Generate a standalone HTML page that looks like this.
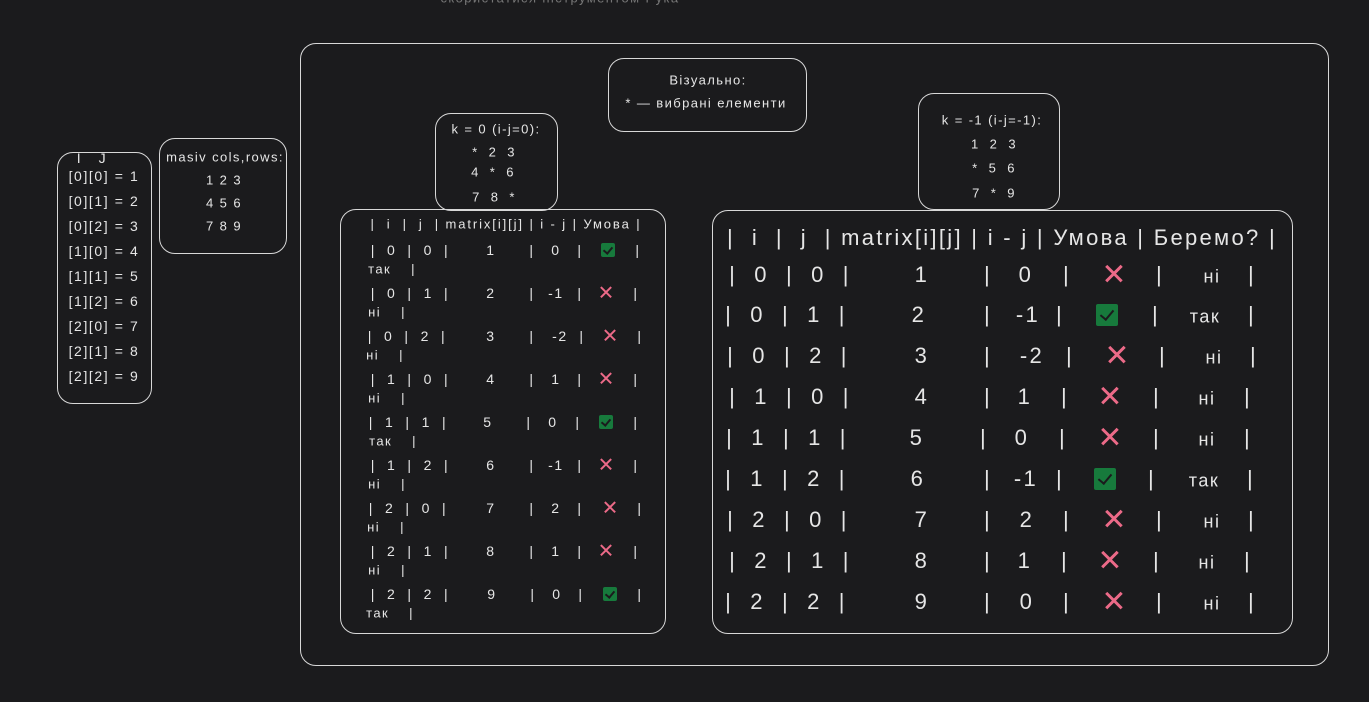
<!DOCTYPE html>
<html><head><meta charset="utf-8"><style>
body{margin:0;width:1369px;height:702px;background:#1b1b1d;overflow:hidden;position:relative;font-family:"Liberation Sans","DejaVu Sans",sans-serif;color:#e6e6e6}
.b{position:absolute;border:1.5px solid #d8d8d8;border-radius:16px;box-sizing:border-box}
.t{position:absolute;white-space:nowrap;transform:translate(-50%,-50%)}
.s{font-size:13px;letter-spacing:1.4px}.m{font-size:14px;letter-spacing:1.6px}.L{font-size:22px;letter-spacing:2.4px}
.n{font-size:18px;letter-spacing:1.5px}
.ok{position:absolute;width:14px;height:14px;background:#177a3c;border-radius:2px;transform:translate(-50%,-50%)}
.ok:after{content:"";position:absolute;left:4px;top:2px;width:4px;height:7px;border:solid #1b1b1d;border-width:0 2px 2px 0;transform:rotate(40deg)}
.okL{width:22px;height:22px}.okL:after{left:7px;top:3px;width:6px;height:11px}
.x{position:absolute;color:#ec6a88;font-weight:bold;transform:translate(-50%,-50%);font-size:20px}
.xL{font-size:30px}
</style></head><body>
<div class="t s" style="left:560px;top:-2px;color:#777">скористатися інструментом Рука</div>

<div class="b" style="left:300px;top:43px;width:1029px;height:623px"></div>

<div class="b" style="left:57px;top:152px;width:95px;height:252px"></div>
<div class="t m" style="left:92px;top:158px">I&nbsp;&nbsp;&nbsp;J</div>
<div class="t m" style="left:104px;top:176px">[0][0] = 1</div>
<div class="t m" style="left:104px;top:201px">[0][1] = 2</div>
<div class="t m" style="left:104px;top:226px">[0][2] = 3</div>
<div class="t m" style="left:104px;top:251px">[1][0] = 4</div>
<div class="t m" style="left:104px;top:276px">[1][1] = 5</div>
<div class="t m" style="left:104px;top:301px">[1][2] = 6</div>
<div class="t m" style="left:104px;top:326px">[2][0] = 7</div>
<div class="t m" style="left:104px;top:351px">[2][1] = 8</div>
<div class="t m" style="left:104px;top:376px">[2][2] = 9</div>

<div class="b" style="left:159px;top:138px;width:128px;height:116px"></div>
<div class="t s" style="left:225px;top:157px">masiv cols,rows:</div>
<div class="t s" style="left:224px;top:180px">1 2 3</div>
<div class="t s" style="left:224px;top:203px">4 5 6</div>
<div class="t s" style="left:224px;top:226px">7 8 9</div>

<div class="b" style="left:608px;top:58px;width:199px;height:74px"></div>
<div class="t s" style="left:708px;top:80px">Візуально:</div>
<div class="t s" style="left:706px;top:103px">* — вибрані елементи</div>

<div class="b" style="left:435px;top:113px;width:123px;height:98px"></div>
<div class="t s" style="left:496px;top:129px">k = 0 (i-j=0):</div>
<div class="t s" style="left:494px;top:152px">*&nbsp; 2&nbsp; 3</div>
<div class="t s" style="left:493px;top:172px">4&nbsp; *&nbsp; 6</div>
<div class="t s" style="left:494px;top:197px">7&nbsp; 8&nbsp; *</div>

<div class="b" style="left:918px;top:93px;width:142px;height:117px"></div>
<div class="t s" style="left:992px;top:120px">k = -1 (i-j=-1):</div>
<div class="t s" style="left:994px;top:144px">1&nbsp; 2&nbsp; 3</div>
<div class="t s" style="left:994px;top:168px">*&nbsp; 5&nbsp; 6</div>
<div class="t s" style="left:994px;top:193px">7&nbsp; *&nbsp; 9</div>

<div class="b" style="left:340px;top:209px;width:326px;height:425px"></div>
<div class="t s" style="left:506px;top:224px;letter-spacing:1.9px">|&nbsp; i&nbsp; |&nbsp; j&nbsp; | matrix[i][j] | i - j | Умова |</div>

<div style="position:absolute;left:0;top:250px">
<div class="t m" style="left:410px;top:0">|&nbsp; 0&nbsp; |&nbsp; 0&nbsp; |</div><div class="t m" style="left:491px;top:0">1</div><div class="t m" style="left:532px;top:0">|</div><div class="t m" style="left:556px;top:0">0</div><div class="t m" style="left:580px;top:0">|</div><div class="ok" style="left:608px;top:0"></div><div class="t m" style="left:638px;top:0">|</div><div class="t s" style="left:392px;top:19px">так&nbsp;&nbsp;&nbsp; |</div></div>
<div style="position:absolute;left:0;top:293px">
<div class="t m" style="left:410px;top:0">|&nbsp; 0&nbsp; |&nbsp; 1&nbsp; |</div><div class="t m" style="left:491px;top:0">2</div><div class="t m" style="left:532px;top:0">|</div><div class="t m" style="left:556px;top:0">-1</div><div class="t m" style="left:580px;top:0">|</div><div class="x" style="left:606px;top:0">✕</div><div class="t m" style="left:636px;top:0">|</div><div class="t s" style="left:387px;top:19px">ні&nbsp;&nbsp;&nbsp; |</div></div>
<div style="position:absolute;left:0;top:336px">
<div class="t m" style="left:407px;top:0">|&nbsp; 0&nbsp; |&nbsp; 2&nbsp; |</div><div class="t m" style="left:491px;top:0">3</div><div class="t m" style="left:532px;top:0">|</div><div class="t m" style="left:560px;top:0">-2</div><div class="t m" style="left:582px;top:0">|</div><div class="x" style="left:610px;top:0">✕</div><div class="t m" style="left:640px;top:0">|</div><div class="t s" style="left:385px;top:19px">ні&nbsp;&nbsp;&nbsp; |</div></div>
<div style="position:absolute;left:0;top:379px">
<div class="t m" style="left:410px;top:0">|&nbsp; 1&nbsp; |&nbsp; 0&nbsp; |</div><div class="t m" style="left:491px;top:0">4</div><div class="t m" style="left:532px;top:0">|</div><div class="t m" style="left:556px;top:0">1</div><div class="t m" style="left:580px;top:0">|</div><div class="x" style="left:606px;top:0">✕</div><div class="t m" style="left:636px;top:0">|</div><div class="t s" style="left:387px;top:19px">ні&nbsp;&nbsp;&nbsp; |</div></div>
<div style="position:absolute;left:0;top:422px">
<div class="t m" style="left:408px;top:0">|&nbsp; 1&nbsp; |&nbsp; 1&nbsp; |</div><div class="t m" style="left:488px;top:0">5</div><div class="t m" style="left:529px;top:0">|</div><div class="t m" style="left:553px;top:0">0</div><div class="t m" style="left:578px;top:0">|</div><div class="ok" style="left:606px;top:0"></div><div class="t m" style="left:636px;top:0">|</div><div class="t s" style="left:393px;top:19px">так&nbsp;&nbsp;&nbsp; |</div></div>
<div style="position:absolute;left:0;top:465px">
<div class="t m" style="left:410px;top:0">|&nbsp; 1&nbsp; |&nbsp; 2&nbsp; |</div><div class="t m" style="left:491px;top:0">6</div><div class="t m" style="left:532px;top:0">|</div><div class="t m" style="left:556px;top:0">-1</div><div class="t m" style="left:580px;top:0">|</div><div class="x" style="left:606px;top:0">✕</div><div class="t m" style="left:636px;top:0">|</div><div class="t s" style="left:387px;top:19px">ні&nbsp;&nbsp;&nbsp; |</div></div>
<div style="position:absolute;left:0;top:508px">
<div class="t m" style="left:408px;top:0">|&nbsp; 2&nbsp; |&nbsp; 0&nbsp; |</div><div class="t m" style="left:491px;top:0">7</div><div class="t m" style="left:532px;top:0">|</div><div class="t m" style="left:556px;top:0">2</div><div class="t m" style="left:580px;top:0">|</div><div class="x" style="left:610px;top:0">✕</div><div class="t m" style="left:640px;top:0">|</div><div class="t s" style="left:386px;top:19px">ні&nbsp;&nbsp;&nbsp; |</div></div>
<div style="position:absolute;left:0;top:551px">
<div class="t m" style="left:410px;top:0">|&nbsp; 2&nbsp; |&nbsp; 1&nbsp; |</div><div class="t m" style="left:491px;top:0">8</div><div class="t m" style="left:532px;top:0">|</div><div class="t m" style="left:556px;top:0">1</div><div class="t m" style="left:580px;top:0">|</div><div class="x" style="left:606px;top:0">✕</div><div class="t m" style="left:636px;top:0">|</div><div class="t s" style="left:387px;top:19px">ні&nbsp;&nbsp;&nbsp; |</div></div>
<div style="position:absolute;left:0;top:594px">
<div class="t m" style="left:410px;top:0">|&nbsp; 2&nbsp; |&nbsp; 2&nbsp; |</div><div class="t m" style="left:492px;top:0">9</div><div class="t m" style="left:533px;top:0">|</div><div class="t m" style="left:557px;top:0">0</div><div class="t m" style="left:581px;top:0">|</div><div class="ok" style="left:610px;top:0"></div><div class="t m" style="left:640px;top:0">|</div><div class="t s" style="left:390px;top:19px">так&nbsp;&nbsp;&nbsp; |</div></div>

<div class="b" style="left:712px;top:210px;width:581px;height:424px"></div>
<div class="t L" style="left:1002px;top:238px;letter-spacing:2.3px">|&nbsp; i&nbsp; |&nbsp; j&nbsp; | matrix[i][j] | i - j | Умова | Беремо? |</div>

<div style="position:absolute;left:0;top:275px"><div class="t L" style="left:790px;top:0">|&nbsp; 0&nbsp; |&nbsp; 0&nbsp; |</div><div class="t L" style="left:922px;top:0">1</div><div class="t L" style="left:988px;top:0">|</div><div class="t L" style="left:1026px;top:0">0</div><div class="t L" style="left:1067px;top:0">|</div><div class="x xL" style="left:1114px;top:0">✕</div><div class="t L" style="left:1160px;top:0">|</div><div class="t n" style="left:1212px;top:2px">ні</div><div class="t L" style="left:1252px;top:0">|</div></div>
<div style="position:absolute;left:0;top:315px"><div class="t L" style="left:786px;top:0">|&nbsp; 0&nbsp; |&nbsp; 1&nbsp; |</div><div class="t L" style="left:919px;top:0">2</div><div class="t L" style="left:988px;top:0">|</div><div class="t L" style="left:1028px;top:0">-1</div><div class="t L" style="left:1060px;top:0">|</div><div class="ok okL" style="left:1107px;top:0"></div><div class="t L" style="left:1156px;top:0">|</div><div class="t n" style="left:1205px;top:2px">так</div><div class="t L" style="left:1252px;top:0">|</div></div>
<div style="position:absolute;left:0;top:356px"><div class="t L" style="left:788px;top:0">|&nbsp; 0&nbsp; |&nbsp; 2&nbsp; |</div><div class="t L" style="left:922px;top:0">3</div><div class="t L" style="left:988px;top:0">|</div><div class="t L" style="left:1032px;top:0">-2</div><div class="t L" style="left:1070px;top:0">|</div><div class="x xL" style="left:1117px;top:0">✕</div><div class="t L" style="left:1163px;top:0">|</div><div class="t n" style="left:1214px;top:2px">ні</div><div class="t L" style="left:1254px;top:0">|</div></div>
<div style="position:absolute;left:0;top:397px"><div class="t L" style="left:790px;top:0">|&nbsp; 1&nbsp; |&nbsp; 0&nbsp; |</div><div class="t L" style="left:922px;top:0">4</div><div class="t L" style="left:988px;top:0">|</div><div class="t L" style="left:1025px;top:0">1</div><div class="t L" style="left:1065px;top:0">|</div><div class="x xL" style="left:1110px;top:0">✕</div><div class="t L" style="left:1157px;top:0">|</div><div class="t n" style="left:1207px;top:2px">ні</div><div class="t L" style="left:1248px;top:0">|</div></div>
<div style="position:absolute;left:0;top:438px"><div class="t L" style="left:787px;top:0">|&nbsp; 1&nbsp; |&nbsp; 1&nbsp; |</div><div class="t L" style="left:917px;top:0">5</div><div class="t L" style="left:984px;top:0">|</div><div class="t L" style="left:1022px;top:0">0</div><div class="t L" style="left:1063px;top:0">|</div><div class="x xL" style="left:1110px;top:0">✕</div><div class="t L" style="left:1157px;top:0">|</div><div class="t n" style="left:1207px;top:2px">ні</div><div class="t L" style="left:1248px;top:0">|</div></div>
<div style="position:absolute;left:0;top:479px"><div class="t L" style="left:786px;top:0">|&nbsp; 1&nbsp; |&nbsp; 2&nbsp; |</div><div class="t L" style="left:918px;top:0">6</div><div class="t L" style="left:988px;top:0">|</div><div class="t L" style="left:1026px;top:0">-1</div><div class="t L" style="left:1060px;top:0">|</div><div class="ok okL" style="left:1105px;top:0"></div><div class="t L" style="left:1152px;top:0">|</div><div class="t n" style="left:1204px;top:2px">так</div><div class="t L" style="left:1251px;top:0">|</div></div>
<div style="position:absolute;left:0;top:520px"><div class="t L" style="left:788px;top:0">|&nbsp; 2&nbsp; |&nbsp; 0&nbsp; |</div><div class="t L" style="left:922px;top:0">7</div><div class="t L" style="left:988px;top:0">|</div><div class="t L" style="left:1027px;top:0">2</div><div class="t L" style="left:1067px;top:0">|</div><div class="x xL" style="left:1114px;top:0">✕</div><div class="t L" style="left:1160px;top:0">|</div><div class="t n" style="left:1212px;top:2px">ні</div><div class="t L" style="left:1252px;top:0">|</div></div>
<div style="position:absolute;left:0;top:561px"><div class="t L" style="left:790px;top:0">|&nbsp; 2&nbsp; |&nbsp; 1&nbsp; |</div><div class="t L" style="left:922px;top:0">8</div><div class="t L" style="left:988px;top:0">|</div><div class="t L" style="left:1025px;top:0">1</div><div class="t L" style="left:1065px;top:0">|</div><div class="x xL" style="left:1110px;top:0">✕</div><div class="t L" style="left:1157px;top:0">|</div><div class="t n" style="left:1207px;top:2px">ні</div><div class="t L" style="left:1248px;top:0">|</div></div>
<div style="position:absolute;left:0;top:602px"><div class="t L" style="left:786px;top:0">|&nbsp; 2&nbsp; |&nbsp; 2&nbsp; |</div><div class="t L" style="left:922px;top:0">9</div><div class="t L" style="left:988px;top:0">|</div><div class="t L" style="left:1027px;top:0">0</div><div class="t L" style="left:1067px;top:0">|</div><div class="x xL" style="left:1114px;top:0">✕</div><div class="t L" style="left:1160px;top:0">|</div><div class="t n" style="left:1212px;top:2px">ні</div><div class="t L" style="left:1252px;top:0">|</div></div>
</body></html>
